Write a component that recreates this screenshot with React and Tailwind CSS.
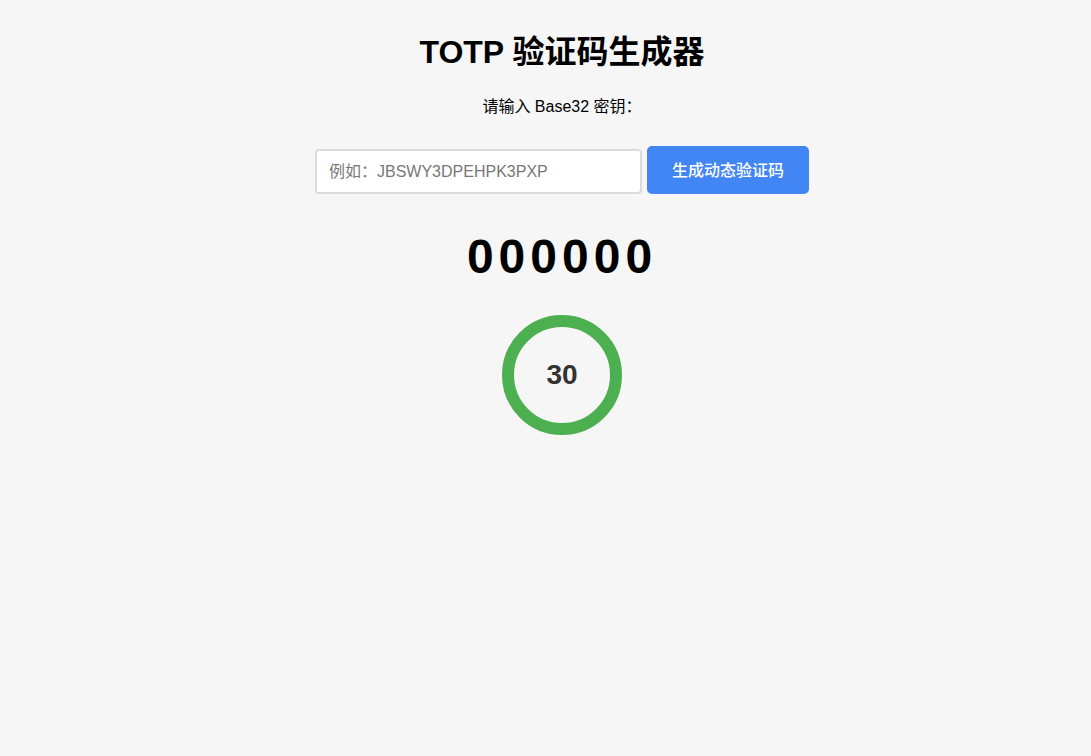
import { useState } from 'react';

const font = { fontFamily: '"Liberation Sans", Arial, "Noto Sans CJK SC", sans-serif' };

const Countdown = ({ seconds }) => (
  <div className="w-[120px] h-[120px] rounded-full border-[12px] border-[#4caf50] flex items-center justify-center">
    <span className="text-[28px] font-bold text-[#333]">{seconds}</span>
  </div>
);

const App = () => {
  const [secret, setSecret] = useState('');
  const [code] = useState('000000');

  return (
    <div className="min-h-[756px] bg-[#f6f6f6] pl-[33px] text-black" style={font}>
      <div className="flex flex-col items-center">
        <h1 className="mt-[32px] text-[32px] leading-[40px] font-bold">TOTP 验证码生成器</h1>
        <p className="mt-[23px] text-[16px] leading-[24px]">请输入 Base32 密钥：</p>

        <div className="mt-[27px] flex items-end gap-[5px]">
          <input
            value={secret}
            onChange={e => setSecret(e.target.value)}
            placeholder="例如：JBSWY3DPEHPK3PXP"
            className="w-[327px] h-[45px] px-[12px] text-[16px] bg-white border-2 border-[#dcdcdc] rounded-[4px] outline-none placeholder:text-[#777]"
            style={font}
          />
          <button className="w-[162px] h-[48px] pt-[2px] bg-[#4285f4] text-white text-[16px] font-medium rounded-[5px]" style={font}>
            生成动态验证码
          </button>
        </div>

        <div className="mt-[35px] text-[48px] leading-[56px] font-bold tracking-[5px]">{code}</div>

        <div className="mt-[30px]">
          <Countdown seconds={30} />
        </div>
      </div>
    </div>
  );
};

export default App;
